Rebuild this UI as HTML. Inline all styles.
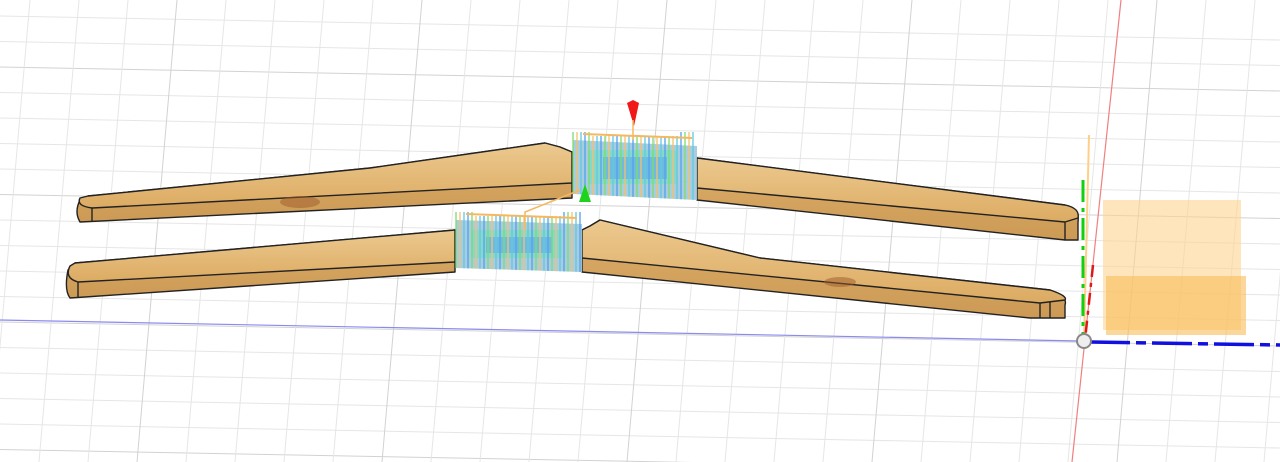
<!DOCTYPE html>
<html><head><meta charset="utf-8"><style>
html,body{margin:0;padding:0;background:#fff;overflow:hidden;width:1280px;height:462px}
svg{display:block}
</style></head><body>
<svg id="s" width="1280" height="462" viewBox="0 0 1280 462" xmlns="http://www.w3.org/2000/svg">
<defs>
<linearGradient id="wood" x1="0" y1="0" x2="0" y2="1">
<stop offset="0" stop-color="#ecc98f"/><stop offset="1" stop-color="#dcab62"/></linearGradient>
<linearGradient id="wood2" x1="0" y1="0" x2="0" y2="1">
<stop offset="0" stop-color="#dcae6a"/><stop offset="1" stop-color="#cc9a55"/></linearGradient>
</defs>
<g id="grid" stroke="#e6e6e6" stroke-width="1"></g>
<line x1="0" y1="320" x2="1080" y2="341" stroke="#8a8af0" stroke-width="1.2"/>
<line x1="1121" y1="0" x2="1072" y2="462" stroke="#f08080" stroke-width="1.2"/>

<g stroke="#222" stroke-width="1.4" stroke-linejoin="round">
<path d="M88,196 L370,168 L545,143 L560,147 L572,152 L572,198 L80,222 Q74,212 80,200 Z" fill="url(#wood2)"/>
<path d="M88,196 L370,168 L545,143 L560,147 L572,152 L572,183 L92,208 Q76,206 80,198 Z" fill="url(#wood)"/>
<path d="M697,158 L1065,205 Q1080,208 1078,222 L1078,240 L1065,240 L697,200 Z" fill="url(#wood2)"/>
<path d="M697,158 L1065,205 Q1080,208 1078,218 L1065,222 L697,188 Z" fill="url(#wood)"/>
<line x1="1065" y1="222" x2="1065" y2="240"/>
<line x1="92" y1="208" x2="92" y2="221"/>
<path d="M75,263 L455,230 L455,272 L70,298 Q64,290 68,270 Z" fill="url(#wood2)"/>
<path d="M75,263 L455,230 L455,262 L78,282 Q64,278 70,266 Z" fill="url(#wood)"/>
<path d="M582,230 L590,226 L600,220 L760,258 L1050,290 Q1068,296 1065,305 L1065,318 L1030,318 L582,272 Z" fill="url(#wood2)"/>
<path d="M582,230 L590,226 L600,220 L760,258 L1050,290 Q1068,296 1065,300 L1040,303 L582,258 Z" fill="url(#wood)"/>
<line x1="1050" y1="302" x2="1050" y2="318"/><line x1="1040" y1="303" x2="1040" y2="318"/>
<line x1="78" y1="282" x2="78" y2="298"/>
</g>
<ellipse cx="300" cy="202" rx="20" ry="6" fill="#9b5a2a" opacity=".5"/>
<ellipse cx="840" cy="282" rx="16" ry="5" fill="#9b5a2a" opacity=".5"/>

<g id="j1"></g>
<g id="j2"></g>
<path d="M580,190 L525,212 L525,230" stroke="#f5b860" stroke-width="1.5" fill="none"/>
<path d="M633,100 L639,103 L634,126 L627,103 Z" fill="#f01818"/>
<path d="M585,184 L591,202 L579,202 Z" fill="#1ed21e"/>
<line x1="633" y1="120" x2="633" y2="140" stroke="#f5b860" stroke-width="1.5"/>

<rect x="1103" y="200" width="138" height="130" fill="#ffd490" opacity=".6"/>
<rect x="1106" y="276" width="140" height="59" fill="#f8bd5a" opacity=".6"/>
<line x1="1089" y1="135" x2="1084" y2="340" stroke="#ffcf8a" stroke-width="2"/>
<line x1="1083" y1="180" x2="1083" y2="336" stroke="#10d010" stroke-width="3" stroke-dasharray="22,6,4,6"/>
<line x1="1093" y1="265" x2="1085" y2="340" stroke="#e01818" stroke-width="2.5" stroke-dasharray="12,6,4,6"/>
<line x1="1090" y1="342" x2="1280" y2="345" stroke="#1010e0" stroke-width="3.5" stroke-dasharray="40,6,10,6"/>
<circle cx="1084" cy="341" r="7" fill="#eee" stroke="#888" stroke-width="2"/>
</svg>
<script>
var ns="http://www.w3.org/2000/svg",g=document.getElementById('grid');
function L(x1,y1,x2,y2,c){var l=document.createElementNS(ns,'line');l.setAttribute('x1',x1);l.setAttribute('y1',y1);l.setAttribute('x2',x2);l.setAttribute('y2',y2);if(c)l.setAttribute('stroke',c);g.appendChild(l);}
for(var i=0;i<20;i++){var y=16+i*25.5;L(0,y,1280,y+24,(i%5==2)?'#d2d2d2':null);}
for(var k=-2;k<30;k++){var x=30+k*49;L(x,0,x-40,462,(k%5==3)?'#d2d2d2':null);}
function joint(id,x0,y0,w,h,slope){var j=document.getElementById(id),s='';
s+='<polygon points="'+x0+','+(y0+8)+' '+(x0+w)+','+(y0+8+slope)+' '+(x0+w)+','+(y0+h+slope)+' '+x0+','+(y0+h)+'" fill="#9ec8dc" opacity=".9"/>';
s+='<rect x="'+(x0+15)+'" y="'+(y0+18)+'" width="'+(w-35)+'" height="'+(h-28)+'" fill="#6fe0c0" opacity=".6"/>';
s+='<rect x="'+(x0+30)+'" y="'+(y0+25)+'" width="'+(w-60)+'" height="'+(h-40)+'" fill="#60a8e8" opacity=".6"/>';
for(var i=0;i<w;i+=4){var c=['#7cdc6c','#f5c070','#60c8e0','#50a0f0'][i/4%4];s+='<line x1="'+(x0+i)+'" y1="'+(y0+(i<20||i>w-20?0:4))+'" x2="'+(x0+i)+'" y2="'+(y0+h+slope*i/w)+'" stroke="'+c+'" stroke-width="1.3"/>';}
s+='<line x1="'+(x0+10)+'" y1="'+(y0+2)+'" x2="'+(x0+w-5)+'" y2="'+(y0+6)+'" stroke="#f5b860" stroke-width="2"/>';
j.innerHTML=s;}
joint('j1',573,132,124,62,6);
joint('j2',456,212,126,56,4);
</script>
</body></html>
